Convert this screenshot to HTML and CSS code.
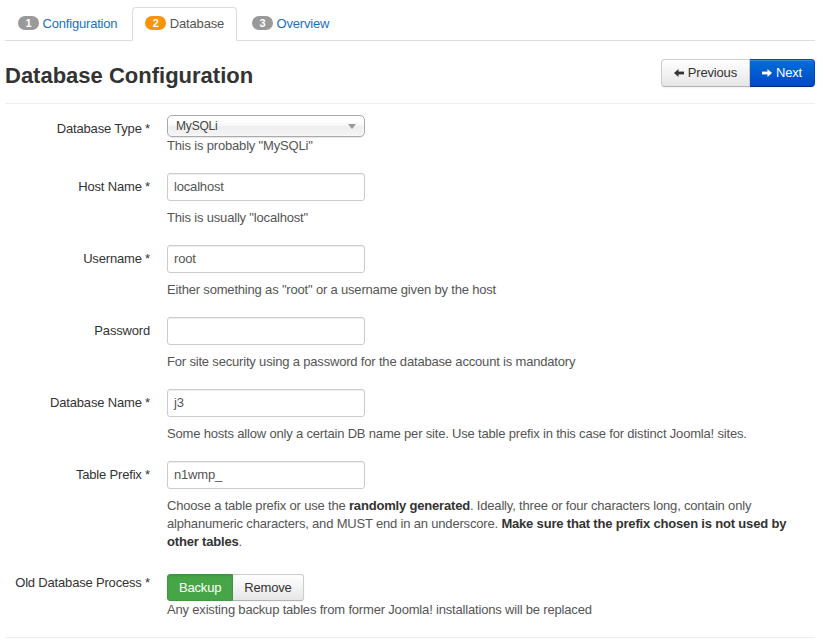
FILE: index.html
```html
<!DOCTYPE html>
<html>
<head>
<meta charset="utf-8">
<link rel="stylesheet" href="styles.css">
</head>
<body>
<div class="page">
  <ul class="tabs">
    <li><a class="tab-link"><span class="badge">1</span> Configuration</a></li>
    <li class="active"><a class="tab-link"><span class="badge badge-warning">2</span> Database</a></li>
    <li><a class="tab-link"><span class="badge">3</span> Overview</a></li>
  </ul>

  <div class="header">
    <h3 class="title">Database Configuration</h3>
    <div class="btn-group">
      <button class="btn btn-nav"><svg class="ico" width="10" height="10" viewBox="0 0 10 10"><polygon points="0,5 4.5,1 4.5,9" fill="#333"/><rect x="4" y="3.6" width="6" height="2.8" fill="#333"/></svg> Previous</button>
      <button class="btn btn-nav btn-primary"><svg class="ico" width="10" height="10" viewBox="0 0 10 10"><polygon points="10,5 5.5,1 5.5,9" fill="#fff"/><rect x="0" y="3.6" width="6" height="2.8" fill="#fff"/></svg> Next</button>
    </div>
  </div>
  <hr class="rule">

  <form class="form">
    <div class="group">
      <label class="label">Database Type *</label>
      <div class="controls">
        <div class="chosen"><span>MySQLi</span><i class="caret"></i></div>
        <p class="help help-tight">This is probably "MySQLi"</p>
      </div>
    </div>
    <div class="group">
      <label class="label">Host Name *</label>
      <div class="controls">
        <div class="input">localhost</div>
        <p class="help">This is usually "localhost"</p>
      </div>
    </div>
    <div class="group">
      <label class="label">Username *</label>
      <div class="controls">
        <div class="input">root</div>
        <p class="help">Either something as "root" or a username given by the host</p>
      </div>
    </div>
    <div class="group">
      <label class="label">Password</label>
      <div class="controls">
        <div class="input"></div>
        <p class="help">For site security using a password for the database account is mandatory</p>
      </div>
    </div>
    <div class="group">
      <label class="label">Database Name *</label>
      <div class="controls">
        <div class="input">j3</div>
        <p class="help">Some hosts allow only a certain DB name per site. Use table prefix in this case for distinct Joomla! sites.</p>
      </div>
    </div>
    <div class="group">
      <label class="label">Table Prefix *</label>
      <div class="controls">
        <div class="input">n1wmp_</div>
        <p class="help">Choose a table prefix or use the <b>randomly generated</b>. Ideally, three or four characters long, contain only alphanumeric characters, and MUST end in an underscore. <b>Make sure that the prefix chosen is not used by other tables</b>.</p>
      </div>
    </div>
    <div class="group">
      <label class="label">Old Database Process *</label>
      <div class="controls controls-radio">
        <div class="radio-group">
          <span class="btn btn-success">Backup</span><span class="btn">Remove</span>
        </div>
        <p class="help help-tight">Any existing backup tables from former Joomla! installations will be replaced</p>
      </div>
    </div>
  </form>
  <hr class="rule rule-bottom">
</div>
</body>
</html>
```

FILE: styles.css
```css
* { box-sizing: border-box; }
html, body { margin: 0; padding: 0; background: #fff; }
body {
  font-family: "Liberation Sans", Arial, Helvetica, sans-serif;
  font-size: 13px;
  line-height: 18px;
  letter-spacing: -0.18px;
  color: #333;
}
.page { padding: 7px 10px 0 5px; }

.tabs {
  list-style: none;
  margin: 0;
  padding: 0;
  display: flex;
  border-bottom: 1px solid #ddd;
}
.tabs li { margin: 0 2px -1px 0; }
.tab-link {
  display: block;
  padding: 7px 12px;
  line-height: 18px;
  border: 1px solid transparent;
  border-radius: 4px 4px 0 0;
  color: #1a6fbf;
  cursor: pointer;
}
.tabs .active .tab-link {
  color: #555;
  background: #fff;
  border-color: #ddd #ddd transparent;
}
.badge {
  display: inline-block;
  min-width: 21px;
  padding: 0 6px;
  font-size: 11px;
  font-weight: bold;
  line-height: 14px;
  letter-spacing: 0;
  color: #fff;
  text-align: center;
  background: #999;
  border-radius: 8px;
  vertical-align: 1px;
}
.badge-warning { background: #f89406; }

.header {
  display: flex;
  justify-content: space-between;
  align-items: flex-start;
  margin-top: 18px;
}
.title {
  margin: 0;
  padding-top: 3px;
  font-size: 22px;
  line-height: 28px;
  font-weight: bold;
  letter-spacing: 0;
  color: #333;
}
.btn-group { display: flex; }
.btn {
  display: inline-flex;
  align-items: center;
  gap: 4px;
  font-family: inherit;
  font-size: 13px;
  line-height: 18px;
  letter-spacing: -0.18px;
  padding: 4px 11px;
  color: #333;
  background: linear-gradient(#fff, #e6e6e6);
  border: 1px solid #ccc;
  border-bottom-color: #b3b3b3;
  box-shadow: inset 0 1px 0 rgba(255,255,255,.2), 0 1px 2px rgba(0,0,0,.05);
  margin: 0;
  height: 28px;
}
.btn-nav { padding: 4px 12px; }
.btn-group .btn:first-child { border-radius: 4px 0 0 4px; }
.btn-group .btn:last-child { border-radius: 0 4px 4px 0; border-left: 0; }
.btn-primary {
  color: #fff;
  background: linear-gradient(#0070d6, #0047c7);
  border-color: #0044cc #0044cc #002a80;
}
.ico { display: block; }

.rule {
  border: 0;
  border-top: 1px solid #eee;
  margin: 13px 0 11px;
}
.rule-bottom { margin: 0; }

.form { margin: 0; }
.group {
  display: flex;
  margin-bottom: 18px;
}
.label {
  width: 146px;
  flex: none;
  text-align: right;
  padding-top: 5px;
  padding-right: 1px;
  color: #333;
}
.controls {
  margin-left: 16px;
  flex: 1;
}
.controls-radio { padding-top: 5px; }
.chosen {
  position: relative;
  width: 198px;
  height: 22px;
  border: 1px solid #aaa;
  border-radius: 5px;
  background: linear-gradient(#fff 20%, #f6f6f6 50%, #eee 52%, #f4f4f4 100%);
  box-shadow: inset 0 0 3px #fff, 0 1px 1px rgba(0,0,0,.1);
  color: #444;
  font-size: 12px;
  line-height: 20px;
  padding-left: 8px;
}
.caret {
  position: absolute;
  right: 8px;
  top: 8px;
  width: 0;
  height: 0;
  border-left: 4px solid transparent;
  border-right: 4px solid transparent;
  border-top: 5px solid #999;
}
.input {
  width: 198px;
  height: 28px;
  border: 1px solid #ccc;
  border-radius: 3px;
  box-shadow: inset 0 1px 1px rgba(0,0,0,.075);
  padding: 4px 6px;
  color: #555;
  line-height: 18px;
}
.help {
  margin: 8px 0 0;
  color: #555;
  line-height: 18px;
}
.help b { color: #333; }
.help-tight { margin-top: 0; }
.radio-group { display: flex; }
.radio-group .btn { height: 27px; }
.radio-group .btn:first-child { border-radius: 3px 0 0 3px; }
.radio-group .btn:last-child { border-radius: 0 3px 3px 0; border-left: 0; }
.btn-success {
  color: #fff;
  background: #46a546;
  border-color: #409740;
  box-shadow: inset 0 1px 2px rgba(0,0,0,.1);
}
```
